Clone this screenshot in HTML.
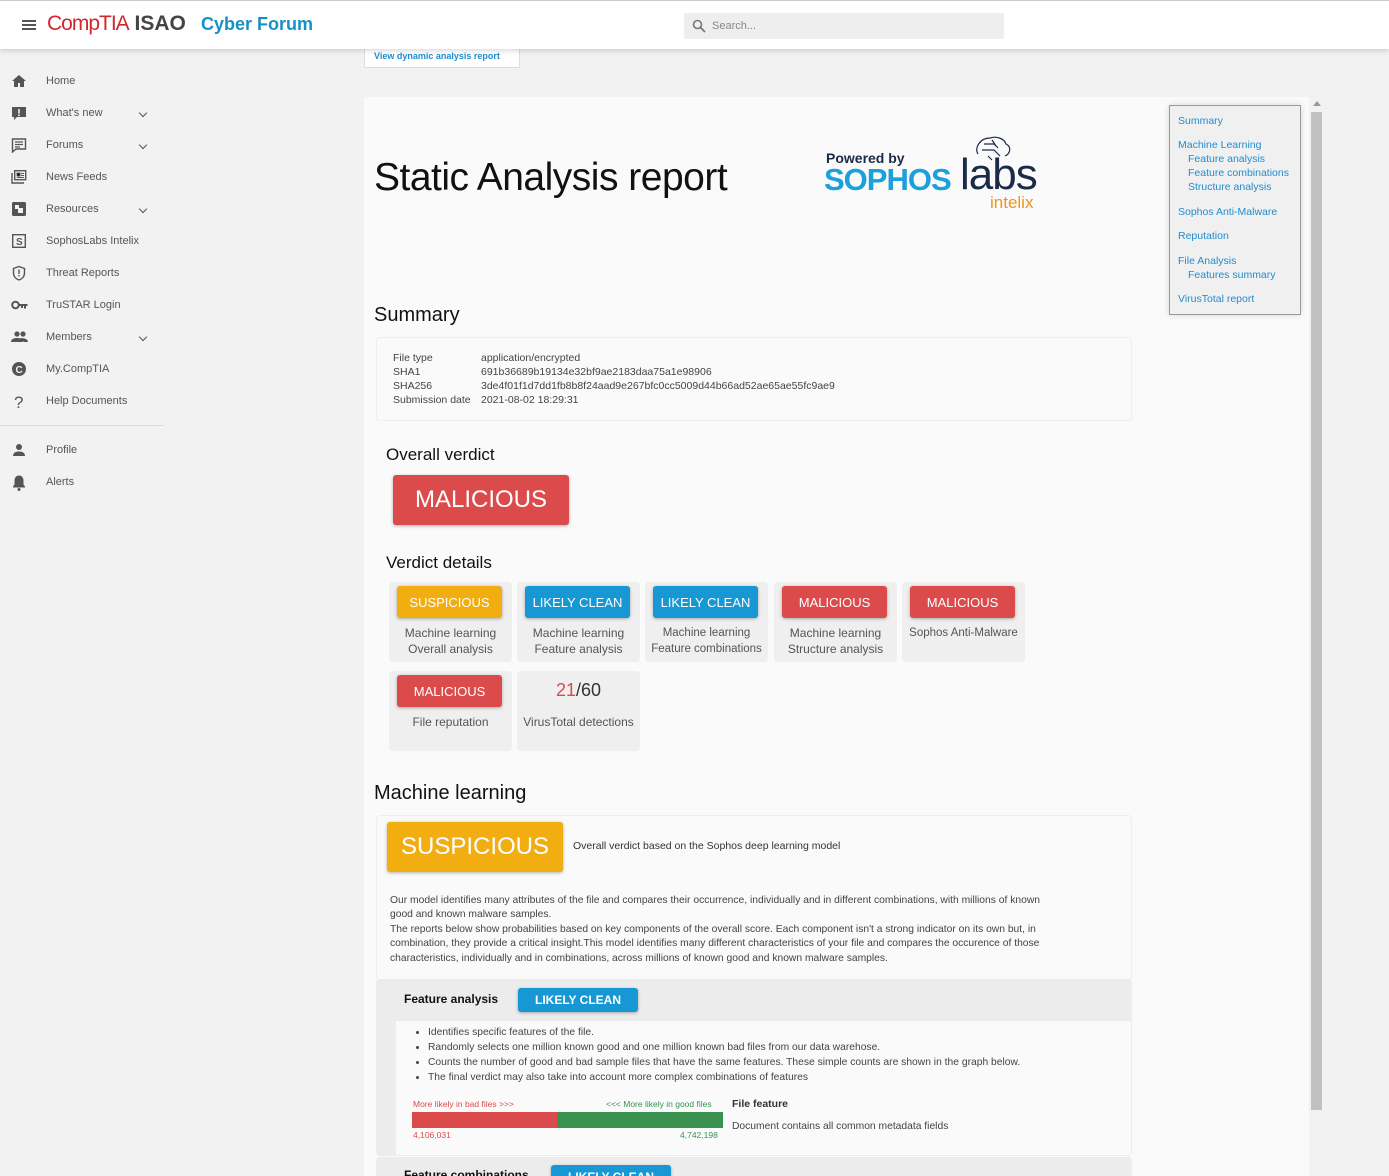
<!DOCTYPE html>
<html><head><meta charset="utf-8"><style>
*{box-sizing:border-box;margin:0;padding:0}
html,body{width:1389px;height:1176px;overflow:hidden}
body{background:#f2f2f2;font-family:"Liberation Sans",sans-serif;position:relative;color:#333}
.abs{position:absolute}
.top{left:0;top:0;width:1389px;height:49px;background:#fff;border-top:1px solid #ccc;box-shadow:0 2px 5px rgba(0,0,0,.15);z-index:5}
.nav div.it{position:absolute;left:0;width:164px;height:32px;font-size:11px;color:#555}
.nav .it span{position:absolute;left:46px;top:11px}
.nav .it svg{position:absolute;left:11px;top:9px}
.nav .chev{position:absolute;left:140px;top:14px;width:6px;height:6px;border-right:1.5px solid #555;border-bottom:1.5px solid #555;transform:rotate(45deg)}
.rep{left:364px;top:97px;width:945px;height:1079px;background:#fafafa}
.badge{position:absolute;color:#fff;text-align:center;border-radius:3px;box-shadow:0 1px 3px rgba(0,0,0,.3)}
.red{background:#dc4b4c}.yel{background:#f2ae11}.blu{background:#1798d5}
.card{position:absolute;background:#efefef;border-radius:4px;width:123px;text-align:center;font-size:12px;color:#555;line-height:16px}
.card .badge{left:8px;top:4px;width:105px;height:32px;line-height:34px;font-size:13px}
.card p{position:absolute;left:0;right:0;top:43px}
.toc a{display:block;color:#1f8dd0;font-size:10.5px;text-decoration:none;line-height:14px}
</style></head><body>
<div class="abs top">
 <div class="abs" style="left:22px;top:19px;width:14px;height:2px;background:#555;box-shadow:0 4px 0 #555,0 8px 0 #555"></div>
 <div class="abs" style="left:47px;top:11px;font-size:21px;color:#d4262e;letter-spacing:-1px">CompTIA<b style="color:#444;letter-spacing:0"> ISAO</b></div>
 <div class="abs" style="left:201px;top:13px;font-size:18px;font-weight:bold;color:#1790c6">Cyber Forum</div>
 <div class="abs" style="left:684px;top:12px;width:320px;height:26px;background:#eee;border-radius:2px">
  <svg class="abs" style="left:8px;top:6px" width="14" height="14" viewBox="0 0 14 14"><circle cx="5.5" cy="5.5" r="4" fill="none" stroke="#777" stroke-width="1.6"/><path d="M8.5 8.5L13 13" stroke="#777" stroke-width="1.8"/></svg>
  <span class="abs" style="left:28px;top:7px;font-size:11px;color:#888">Search...</span>
 </div>
</div>
<div class="nav">
 <div class="it" style="top:64px"><svg width="16" height="16"><path d="M8 2L1 8h2v6h4v-4h2v4h4V8h2z" fill="#555"/></svg><span>Home</span></div>
 <div class="it" style="top:96px"><svg width="16" height="16"><path d="M1 2h14v10H6l-3 3v-3H1z" fill="#555"/><rect x="7.2" y="4" width="1.6" height="4.5" fill="#f2f2f2"/><rect x="7.2" y="9.5" width="1.6" height="1.6" fill="#f2f2f2"/></svg><span>What's new</span><b class="chev"></b></div>
 <div class="it" style="top:128px"><svg width="16" height="16"><path d="M1.5 2h13v10H5l-3.5 3z" fill="none" stroke="#555" stroke-width="1.4"/><path d="M4 5h8M4 7.5h8M4 10h5" stroke="#555" stroke-width="1.2"/></svg><span>Forums</span><b class="chev"></b></div>
 <div class="it" style="top:160px"><svg width="16" height="16"><path d="M1 4v10h12" fill="none" stroke="#555" stroke-width="1.4"/><rect x="3.7" y="1.7" width="11" height="9" fill="none" stroke="#555" stroke-width="1.4"/><path d="M6 4h3v3H6zM10 4.5h3M10 6.5h3M6 8.5h7" stroke="#555" stroke-width="1"/></svg><span>News Feeds</span></div>
 <div class="it" style="top:192px"><svg width="16" height="16"><rect x="1" y="1" width="14" height="14" rx="1.5" fill="#555"/><rect x="4" y="4" width="4" height="4" fill="#f2f2f2"/><rect x="7" y="7" width="5" height="5" fill="#f2f2f2"/></svg><span>Resources</span><b class="chev"></b></div>
 <div class="it" style="top:224px"><svg width="16" height="16"><rect x="1.7" y="1.7" width="12.6" height="12.6" fill="none" stroke="#555" stroke-width="1.4"/><text x="5" y="12" font-size="10" font-weight="bold" fill="#555" font-family="Liberation Sans">S</text></svg><span>SophosLabs Intelix</span></div>
 <div class="it" style="top:256px"><svg width="16" height="16"><path d="M8 1.5l5.5 2v4.5c0 3.5-2.5 6-5.5 7-3-1-5.5-3.5-5.5-7V3.5z" fill="none" stroke="#555" stroke-width="1.4"/><rect x="7.3" y="4.5" width="1.4" height="4.5" fill="#555"/><rect x="7.3" y="10" width="1.4" height="1.4" fill="#555"/></svg><span>Threat Reports</span></div>
 <div class="it" style="top:288px"><svg width="18" height="16"><circle cx="4.5" cy="8" r="3.3" fill="none" stroke="#555" stroke-width="2"/><path d="M7.5 7h9v2h-1.5v2.5h-2V9h-1v2h-2V9H7.5z" fill="#555"/></svg><span>TruSTAR Login</span></div>
 <div class="it" style="top:320px"><svg width="18" height="16"><circle cx="6" cy="5" r="2.6" fill="#555"/><circle cx="12" cy="5" r="2.6" fill="#555"/><path d="M0 13c0-3 3-4 6-4s6 1 6 4zM9 9.3c3 -.5 8 .5 8 3.7h-4" fill="#555"/></svg><span>Members</span><b class="chev"></b></div>
 <div class="it" style="top:352px"><svg width="16" height="16"><circle cx="8" cy="8" r="7" fill="#555"/><text x="4.5" y="12" font-size="10" font-weight="bold" fill="#f2f2f2" font-family="Liberation Sans">C</text></svg><span>My.CompTIA</span></div>
 <div class="it" style="top:384px"><svg width="16" height="18"><text x="3" y="15" font-size="17" fill="#555" font-family="Liberation Sans">?</text></svg><span>Help Documents</span></div>
 <div class="abs" style="left:0;top:425px;width:164px;height:1px;background:#ddd"></div>
 <div class="it" style="top:433px"><svg width="16" height="16"><circle cx="8" cy="5" r="3" fill="#555"/><path d="M2 14c0-3.5 3-4.5 6-4.5s6 1 6 4.5z" fill="#555"/></svg><span>Profile</span></div>
 <div class="it" style="top:465px"><svg width="16" height="18"><path d="M8 1.5c-3 0-4.5 2.5-4.5 5v4L2 12.5v1h12v-1l-1.5-2v-4c0-2.5-1.5-5-4.5-5z" fill="#555"/><circle cx="8" cy="15.5" r="1.5" fill="#555"/></svg><span>Alerts</span></div>
</div>

<div class="abs" style="left:364px;top:49px;width:156px;height:19px;background:#fff;border:1px solid #ddd;border-top:none;font-size:9px;font-weight:bold;color:#1f8dd0;padding:2px 0 0 9px">View dynamic analysis report</div>

<div class="abs rep"></div>
<div class="abs" style="left:374px;top:156px;font-size:39px;color:#111;letter-spacing:-0.5px">Static Analysis report</div>
<div class="abs" style="left:826px;top:150px;font-size:14px;font-weight:bold;color:#1b2a46">Powered by</div>
<div class="abs" style="left:824px;top:162px;font-size:31px;font-weight:bold;color:#1ba0dc;letter-spacing:-1px">SOPHOS</div>
<div class="abs" style="left:960px;top:150px;font-size:44px;color:#1b2a46;letter-spacing:-1px">labs</div>
<svg class="abs" style="left:972px;top:134px" width="44" height="32"><path d="M6 20c-4-6 2-16 12-16 6-2 14 0 16 6 6 3 4 10-1 12M12 10h10l4 4M10 16h12l6 6M16 22l4 4M20 6l4 6" fill="none" stroke="#1b2a46" stroke-width="1.2"/></svg>
<div class="abs" style="left:990px;top:193px;font-size:17px;color:#f29221">intelix</div>

<div class="abs" style="left:374px;top:304px;font-size:20px;color:#111">Summary</div>
<div class="abs" style="left:376px;top:337px;width:756px;height:84px;border:1px solid #eee;border-radius:4px;background:#fafafa;font-size:10.5px;line-height:14px;color:#444">
 <div class="abs" style="left:16px;top:13px">File type<br>SHA1<br>SHA256<br>Submission date</div>
 <div class="abs" style="left:104px;top:13px">application/encrypted<br>691b36689b19134e32bf9ae2183daa75a1e98906<br>3de4f01f1d7dd1fb8b8f24aad9e267bfc0cc5009d44b66ad52ae65ae55fc9ae9<br>2021-08-02 18:29:31</div>
</div>
<div class="abs" style="left:386px;top:445px;font-size:17px;color:#111">Overall verdict</div>
<div class="badge red" style="left:393px;top:475px;width:176px;height:50px;line-height:50px;font-size:24px">MALICIOUS</div>
<div class="abs" style="left:386px;top:553px;font-size:17px;color:#111">Verdict details</div>

<div class="card" style="left:389px;top:582px;height:80px"><div class="badge yel">SUSPICIOUS</div><p>Machine learning<br>Overall analysis</p></div>
<div class="card" style="left:517px;top:582px;height:80px"><div class="badge blu">LIKELY CLEAN</div><p>Machine learning<br>Feature analysis</p></div>
<div class="card" style="left:645px;top:582px;height:80px;width:123px"><div class="badge blu">LIKELY CLEAN</div><p style="white-space:nowrap;font-size:11.5px">Machine learning<br>Feature combinations</p></div>
<div class="card" style="left:774px;top:582px;height:80px"><div class="badge red">MALICIOUS</div><p>Machine learning<br>Structure analysis</p></div>
<div class="card" style="left:902px;top:582px;height:80px"><div class="badge red">MALICIOUS</div><p style="white-space:nowrap;font-size:11.5px">Sophos Anti-Malware</p></div>
<div class="card" style="left:389px;top:671px;height:80px"><div class="badge red">MALICIOUS</div><p>File reputation</p></div>
<div class="card" style="left:517px;top:671px;height:80px"><div style="position:absolute;left:0;right:0;top:11px;font-size:18px;color:#333"><span style="color:#dc4b4c">21</span>/60</div><p>VirusTotal detections</p></div>

<div class="abs" style="left:374px;top:782px;font-size:20px;color:#111">Machine learning</div>
<div class="abs" style="left:376px;top:815px;width:756px;height:165px;border:1px solid #eee;border-radius:4px;background:#fafafa"></div>
<div class="badge yel" style="left:387px;top:822px;width:176px;height:50px;line-height:50px;font-size:24px">SUSPICIOUS</div>
<div class="abs" style="left:573px;top:840px;font-size:10.5px;color:#333">Overall verdict based on the Sophos deep learning model</div>
<div class="abs" style="left:390px;top:894px;width:670px;font-size:10.3px;line-height:14.4px;color:#444">Our model identifies many attributes of the file and compares their occurrence, individually and in different combinations, with millions of known good and known malware samples.<br>The reports below show probabilities based on key components of the overall score. Each component isn't a strong indicator on its own but, in combination, they provide a critical insight.This model identifies many different characteristics of your file and compares the occurence of those characteristics, individually and in combinations, across millions of known good and known malware samples.</div>

<div class="abs" style="left:376px;top:979px;width:756px;height:177px;background:#ececec;border-radius:4px"></div>
<div class="abs" style="left:404px;top:992px;font-size:12px;font-weight:bold;color:#111">Feature analysis</div>
<div class="badge blu" style="left:518px;top:988px;width:120px;height:24px;line-height:24px;font-size:12px;font-weight:bold">LIKELY CLEAN</div>
<div class="abs" style="left:396px;top:1021px;width:735px;height:134px;background:#fafafa"></div>
<ul class="abs" style="left:428px;top:1025px;font-size:10.3px;line-height:15px;color:#444">
<li>Identifies specific features of the file.</li><li>Randomly selects one million known good and one million known bad files from our data warehose.</li><li>Counts the number of good and bad sample files that have the same features. These simple counts are shown in the graph below.</li><li>The final verdict may also take into account more complex combinations of features</li></ul>
<div class="abs" style="left:413px;top:1099px;font-size:8.5px;color:#dc4b4c">More likely in bad files &gt;&gt;&gt;</div>
<div class="abs" style="left:606px;top:1099px;font-size:8.5px;color:#3a9150">&lt;&lt;&lt; More likely in good files</div>
<div class="abs" style="left:412px;top:1112px;width:145px;height:16px;background:#dc4b4c"></div>
<div class="abs" style="left:557px;top:1112px;width:166px;height:16px;background:#3a9150"></div>
<div class="abs" style="left:413px;top:1130px;font-size:8.5px;color:#dc4b4c">4,106,031</div>
<div class="abs" style="left:680px;top:1130px;font-size:8.5px;color:#3a9150">4,742,198</div>
<div class="abs" style="left:732px;top:1098px;font-size:10.5px;font-weight:bold;color:#333">File feature</div>
<div class="abs" style="left:732px;top:1121px;font-size:10.3px;color:#444">Document contains all common metadata fields</div>

<div class="abs" style="left:376px;top:1157px;width:756px;height:19px;background:#ececec;border-radius:4px 4px 0 0;overflow:hidden">
 <div class="abs" style="left:28px;top:11px;font-size:12px;font-weight:bold;color:#111">Feature combinations</div>
 <div class="badge blu" style="left:175px;top:8px;width:120px;height:24px;line-height:24px;font-size:12px;font-weight:bold">LIKELY CLEAN</div>
</div>

<div class="abs toc" style="left:1169px;top:105px;width:132px;height:210px;background:#f0f0f0;border:1px solid #999;box-shadow:0 0 6px rgba(0,0,0,.15);padding:8px 0 0 8px">
<a>Summary</a><a style="margin-top:10px">Machine Learning</a><a style="padding-left:10px">Feature analysis</a><a style="padding-left:10px">Feature combinations</a><a style="padding-left:10px">Structure analysis</a><a style="margin-top:11px">Sophos Anti-Malware</a><a style="margin-top:10px">Reputation</a><a style="margin-top:11px">File Analysis</a><a style="padding-left:10px">Features summary</a><a style="margin-top:10px">VirusTotal report</a>
</div>
<div class="abs" style="left:1313px;top:101px;width:0;height:0;border:4px solid transparent;border-bottom:5px solid #999;border-top:none"></div>
<div class="abs" style="left:1311px;top:112px;width:11px;height:998px;background:#c1c1c1"></div>
</body></html>
